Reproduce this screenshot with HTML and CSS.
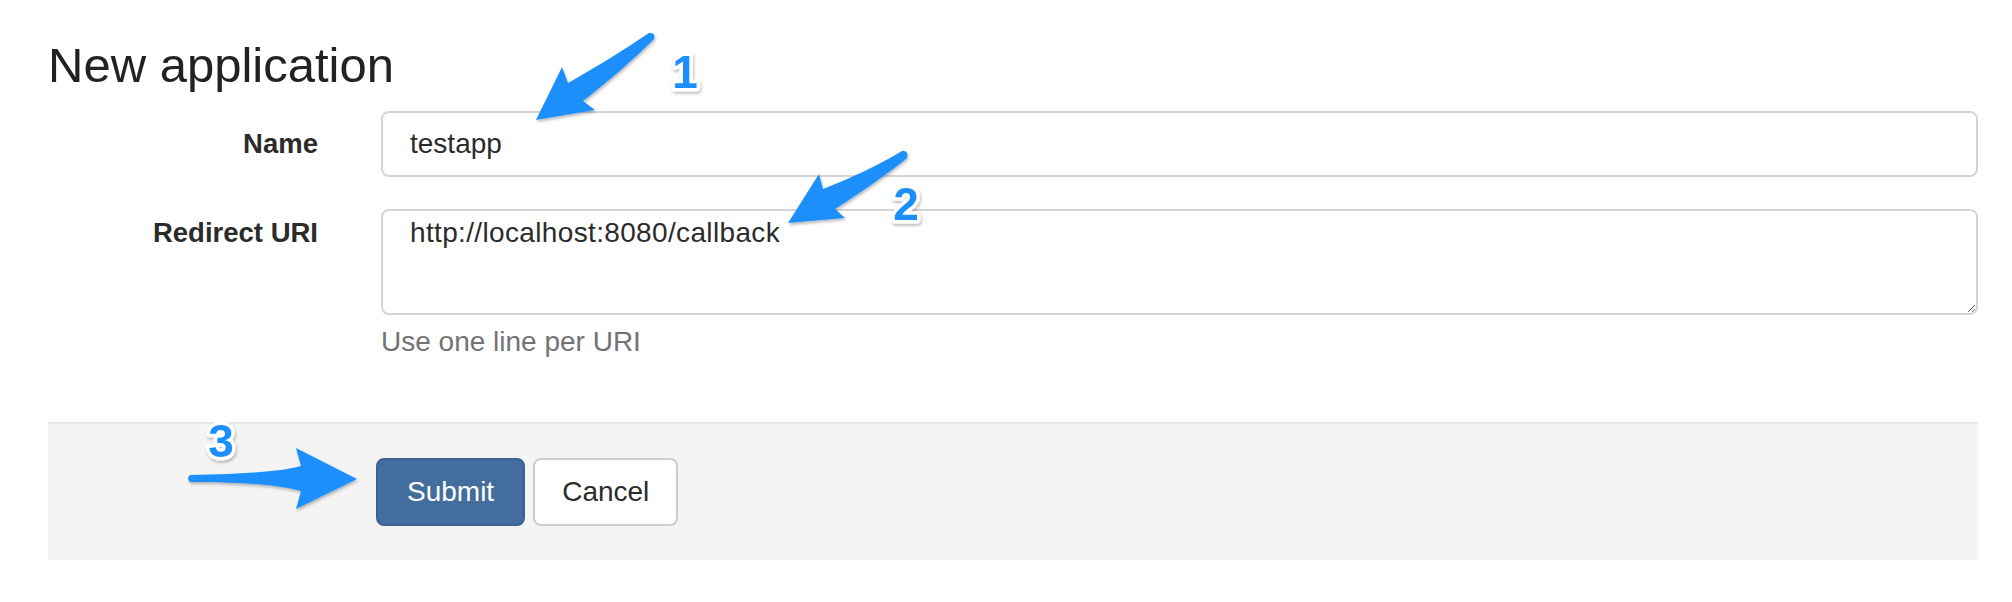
FILE: index.html
```html
<!DOCTYPE html>
<html lang="en">
<head>
<meta charset="utf-8">
<title>New application</title>
<link rel="stylesheet" href="styles.css">
</head>
<body>
<div class="page">
  <h1 class="title">New application</h1>
  <form class="form">
    <div class="row row-name">
      <label class="label" for="name">Name</label>
      <div class="field">
        <input class="input" id="name" type="text" value="testapp">
      </div>
    </div>
    <div class="row row-uri">
      <label class="label" for="uri">Redirect URI</label>
      <div class="field">
        <textarea class="textarea" id="uri">http://localhost:8080/callback</textarea>
        <p class="help">Use one line per URI</p>
      </div>
    </div>
    <div class="actions">
      <button class="btn btn-primary" type="button">Submit</button>
      <button class="btn btn-default" type="button">Cancel</button>
    </div>
  </form>
</div>

<svg class="annotations" width="2012" height="602" viewBox="0 0 2012 602" xmlns="http://www.w3.org/2000/svg">
  <defs>
    <filter id="shadow" x="-20%" y="-20%" width="140%" height="140%">
      <feDropShadow dx="1" dy="2" stdDeviation="1.5" flood-color="#000" flood-opacity="0.28"/>
    </filter>
  </defs>
  <g class="arrow" filter="url(#shadow)">
    <path d="M649,33 C624,50 596,67 568,83 L562,67 L536,120 L595,110 L583,101 C610,80 634,59 654,39 Q656,32 649,33 Z"/>
    <path d="M902,151 C879,165 851,178 823,189 L819,174 L788,223 L845,218 L835,209 C861,192 885,176 907,158 Q909,150 902,151 Z"/>
    <path d="M190,475 C240,474 280,472 301,466 L296,448 L357,479 L296,509 L301,491 C280,485 240,482 190,482 Q186,478.5 190,475 Z"/>
  </g>
  <g class="num" filter="url(#shadow)">
    <text x="685" y="88">1</text>
    <text x="906" y="220">2</text>
    <text x="221" y="457">3</text>
  </g>
</svg>
</body>
</html>
```

FILE: styles.css
```css
html, body {
  margin: 0;
  padding: 0;
  background: #ffffff;
}

body {
  font-family: "Liberation Sans", Helvetica, Arial, sans-serif;
  color: #2b2b2b;
  width: 2012px;
  height: 602px;
  position: relative;
  overflow: hidden;
}

.page {
  padding: 0 34px 0 48px;
}

.title {
  margin: 38px 0 0;
  font-size: 49px;
  line-height: 54px;
  font-weight: normal;
  color: #222222;
}

.form {
  margin-top: 19px;
}

.row {
  display: flex;
  align-items: flex-start;
  gap: 63px;
  margin-bottom: 32px;
}

.row-uri {
  margin-bottom: 0;
}

.label {
  flex: 0 0 270px;
  text-align: right;
  font-size: 27.5px;
  font-weight: bold;
  line-height: 32px;
  color: #2b2b2b;
  padding-top: 8px;
}

.row-name .label {
  padding-top: 17px;
}

.field {
  flex: 1;
  min-width: 0;
}

.input,
.textarea {
  display: block;
  width: 100%;
  box-sizing: border-box;
  border: 2px solid #d5d5d5;
  border-radius: 8px;
  background: #ffffff;
  font-family: "Liberation Sans", Helvetica, Arial, sans-serif;
  font-size: 28px;
  color: #2b2b2b;
  margin: 0;
  outline: none;
}

.input {
  height: 66px;
  padding: 0 27px;
}

.textarea {
  height: 106px;
  padding: 6px 27px;
  line-height: 32px;
  letter-spacing: 0.35px;
  resize: vertical;
}

.help {
  margin: 7px 0 0;
  font-size: 28px;
  line-height: 40px;
  color: #737373;
}

.actions {
  margin-top: 60px;
  border-top: 2px solid #e5e5e5;
  background: #f4f4f4;
  height: 138px;
  box-sizing: border-box;
  padding: 34px 0 0 328px;
  display: flex;
  align-items: flex-start;
  gap: 8px;
}

.btn {
  height: 68px;
  box-sizing: border-box;
  border-radius: 8px;
  font-family: "Liberation Sans", Helvetica, Arial, sans-serif;
  font-size: 28px;
  line-height: 1;
  cursor: pointer;
  margin: 0;
}

.btn-primary {
  background: #436d9d;
  border: 2px solid #3a6190;
  color: #ffffff;
  padding: 0 29px;
}

.btn-default {
  background: #ffffff;
  border: 2px solid #cccccc;
  color: #2b2b2b;
  padding: 0 27px;
}

.annotations {
  position: absolute;
  left: 0;
  top: 0;
  pointer-events: none;
}

.arrow path {
  fill: #1c8ffd;
}

.num text {
  font-family: "Liberation Sans", Arial, sans-serif;
  font-weight: bold;
  font-size: 46px;
  fill: #1c8ffd;
  stroke: #ffffff;
  stroke-width: 7px;
  stroke-linejoin: round;
  paint-order: stroke fill;
  text-anchor: middle;
}
```
